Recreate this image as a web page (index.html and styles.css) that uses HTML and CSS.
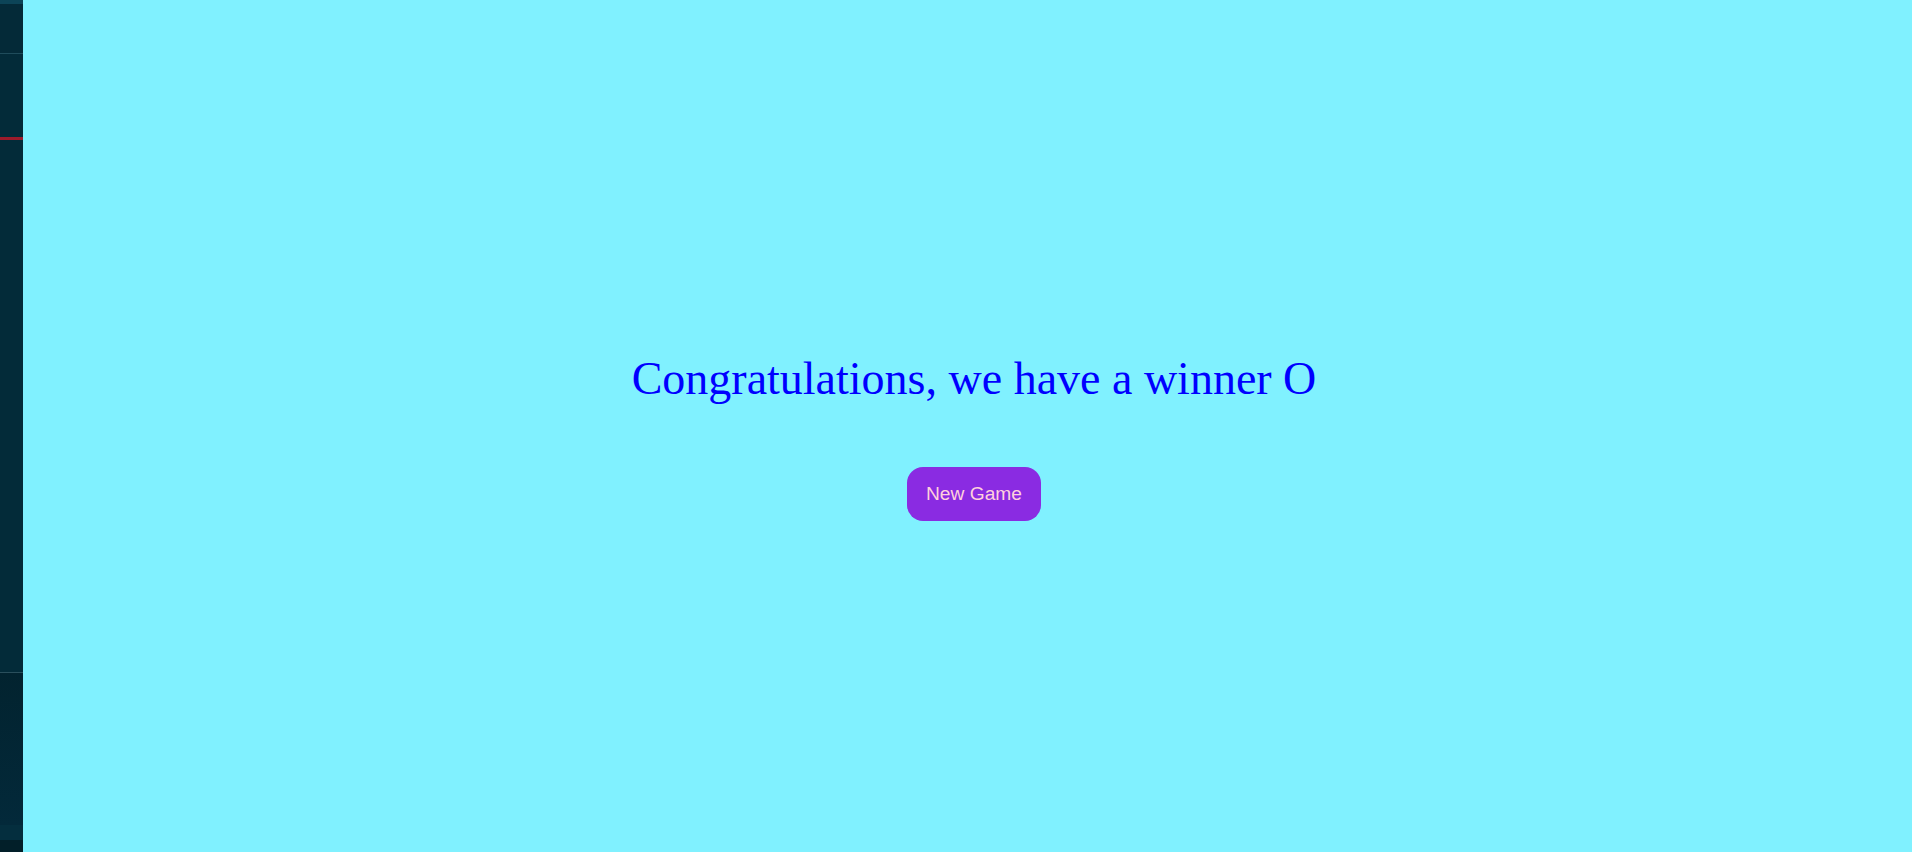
FILE: index.html
```html
<!DOCTYPE html>
<html>
<head>
<meta charset="utf-8">
<link rel="stylesheet" href="styles.css">
</head>
<body>
<div class="app">
  <aside class="side">
    <div class="side-top"></div>
    <div class="side-head"></div>
    <div class="side-red"></div>
    <div class="side-body"></div>
    <div class="side-foot"></div>
    <div class="side-light"></div>
    <div class="side-bottom"></div>
  </aside>
  <main class="overlay">
    <h1 class="winner">Congratulations, we have a winner O</h1>
    <button class="new-game">New Game</button>
  </main>
</div>
</body>
</html>
```
FILE: styles.css
```css
html, body {
  margin: 0;
  padding: 0;
  height: 100%;
  overflow: hidden;
}
.app {
  display: flex;
  height: 852px;
}
.side {
  width: 23px;
  flex: none;
  display: flex;
  flex-direction: column;
  background: #032b39;
}
.side-top {
  height: 4px;
  background: #0c4457;
}
.side-head {
  height: 49px;
  border-bottom: 1px solid #1f4c5b;
  background: #042a38;
}
.side-red {
  margin-top: 83px;
  height: 3px;
  background: #9c1b2b;
}
.side-body {
  flex: 1;
  border-bottom: 1px solid #2a4f5c;
  background: #032b39;
}
.side-foot {
  height: 152px;
  background: linear-gradient(#02232f, #03293a);
}
.side-light {
  height: 15px;
  background: #042e3e;
}
.side-bottom {
  height: 12px;
  background: #021f29;
}
.overlay {
  flex: 1;
  background: #80f1ff;
  display: flex;
  flex-direction: column;
  align-items: center;
  justify-content: center;
  padding-left: 13px;
  padding-top: 20px;
}
.winner {
  margin: 0;
  font-family: "Liberation Serif", "Times New Roman", serif;
  font-weight: normal;
  font-size: 46px;
  color: #0000ff;
  line-height: 1.2;
}
.new-game {
  margin-top: 61px;
  font-family: "Liberation Sans", Arial, sans-serif;
  font-size: 19.2px;
  color: #ffd1dc;
  background: #8a2be2;
  border: none;
  border-radius: 16px;
  padding: 15px 19px 16px;
  line-height: 23px;
}
```
